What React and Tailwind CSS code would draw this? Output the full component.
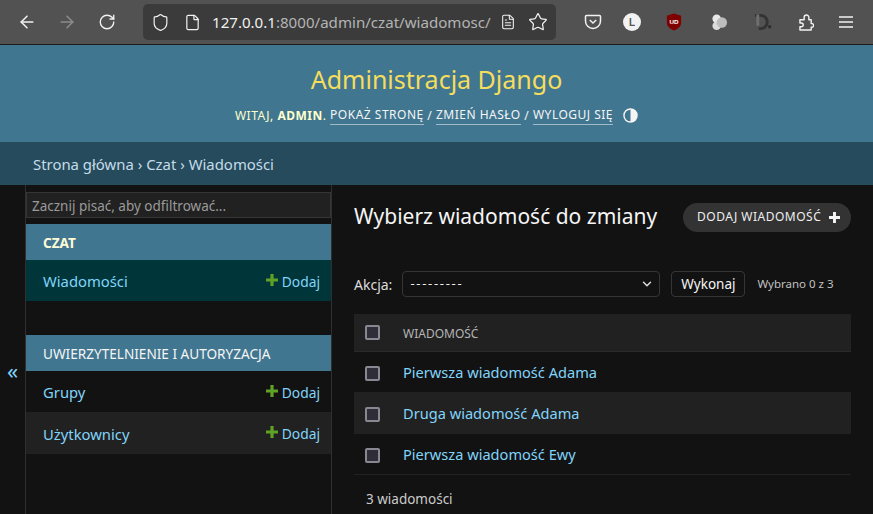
import React from 'react';
import { ArrowLeft, ArrowRight, RotateCw, Shield, File, FileText, Star, ChevronDown } from 'lucide-react';

const sans = "font-['Noto_Sans','Open_Sans',sans-serif]";

function PlusIcon({ className }) {
    return (
        <svg viewBox="0 0 12 12" className={className} fill="currentColor">
            <path d="M4.400 0h3.200v4.400H12v3.200H7.600V12H4.400V7.600H0V4.400h4.400z" />
        </svg>
    );
}

function Toolbar() {
    return (
        <div className="h-[45px] bg-[#525252] border-b border-[#1c1c1c] flex items-center text-[#f2f2f2] shrink-0">
            <ArrowLeft size={20} strokeWidth={1.8} className="ml-[17px]" />
            <ArrowRight size={20} strokeWidth={1.8} className="ml-[20px] text-[#8c8c8c]" />
            <RotateCw size={18} strokeWidth={1.8} className="ml-[21px]" />
            <div className="ml-[27px] w-[413px] h-[36px] bg-[#3b3b3b] rounded-[5px] flex items-center">
                <Shield size={19} strokeWidth={1.5} className="ml-[8px]" />
                <File size={17} strokeWidth={1.7} className="ml-[14px]" />
                <span className="ml-[11px] w-[283px] text-[15.100px] text-[#b4b4b4] whitespace-nowrap overflow-hidden font-['Noto_Sans',sans-serif]">
                    <span className="text-[#f0f0f0]">127.0.0.1</span>:8000/admin/czat/wiadomosc/
                </span>
                <FileText size={16} strokeWidth={1.6} className="ml-[5px]" />
                <Star size={20} strokeWidth={1.5} className="ml-[12px]" />
            </div>
            {/* ikony dodatków */}
            <svg viewBox="0 0 18 18" className="w-[18px] h-[18px] ml-[28px]" fill="none" stroke="currentColor" strokeWidth="1.5">
                <path d="M2.500 2.500h13a1 1 0 0 1 1 1V8a7.500 7.500 0 0 1-15 0V3.500a1 1 0 0 1 1-1z" />
                <path d="M5.800 7L9 10l3.200-3" />
            </svg>
            <div className="ml-[21px] w-[18px] h-[18px] rounded-full bg-[#f2f2f2] text-[#555] text-[10px] font-bold flex items-center justify-center font-['Liberation_Sans',sans-serif]">L</div>
            <svg viewBox="0 0 18 20" className="w-[16px] h-[18px] ml-[25px]">
                <path d="M9 0.500L17 3v8c0 4-4 7-8 8.500C5 18 1 15 1 11V3z" fill="#800000" />
                <text x="9" y="12" fontSize="7" fontWeight="700" textAnchor="middle" fill="#fff" fontFamily="Liberation Sans">UD</text>
            </svg>
            <svg viewBox="0 0 18 18" className="w-[17px] h-[17px] ml-[29px]">
                <circle cx="6" cy="5" r="4.500" fill="#e8e8e8" />
                <circle cx="6" cy="12.500" r="4.500" fill="#dcdcdc" />
                <circle cx="11.500" cy="9" r="5.500" fill="#bdbdbd" />
            </svg>
            <svg viewBox="0 0 20 18" className="w-[19px] h-[18px] ml-[26px]">
                <path d="M1 2h6a7 7 0 0 1 0 14H5" fill="none" stroke="#333" strokeWidth="3" />
                <path d="M4 1v12" stroke="#6f6f6f" strokeWidth="3" />
                <rect x="15" y="12.500" width="3" height="3" fill="#2c2c2c" />
            </svg>
            <svg viewBox="0 0 16 18" className="w-[15px] h-[17px] ml-[26px]" fill="none" stroke="currentColor" strokeWidth="1.5" strokeLinejoin="round">
                <path d="M1 6h4.500V3.500a2.500 2.500 0 0 1 5 0V6H13v4.200h1.200a2 2 0 0 1 0 3.800H13v3H1v-3.500h1.500a2 2 0 0 0 0-4H1z" />
            </svg>
            <svg viewBox="0 0 14 12" className="w-[14px] h-[12px] ml-[25px]" stroke="currentColor" strokeWidth="1.3">
                <path d="M0 1h14M0 6h14M0 11h14" />
            </svg>
        </div>
    );
}

function Caption({ children, bold }) {
    return (
        <div className={`h-[36px] bg-[#417690] flex items-center pl-[17px] pt-[2px] text-[13.600px] uppercase ${bold ? 'font-bold text-[#fefcd7]' : 'text-[#f5f5f5]'}`}>
            {children}
        </div>
    );
}

function ModelRow({ name, rowClass }) {
    return (
        <div className={`flex items-center justify-between pl-[17px] pr-[11px] pt-[2px] text-[#81d4fa] border-b border-[#222] ${rowClass}`}>
            <span className="text-[14.800px]">{name}</span>
            <span className="flex items-center pt-[1px] text-[13.800px]">
                <PlusIcon className="w-[12px] h-[12px] mr-[4px] mb-[5px] text-[#5fa225]" />
                Dodaj
            </span>
        </div>
    );
}

function Checkbox() {
    return <div className="w-[15px] h-[15px] rounded-[2px] border-2 border-[#8a8792] bg-[#2f2d38] shrink-0" />;
}

function ResultRow({ label, shaded }) {
    return (
        <div className={`h-[41px] flex items-center pl-[11px] pt-[2px] border-b border-[#222] ${shaded ? 'bg-[#212121]' : ''}`}>
            <Checkbox />
            <a className="ml-[23px] text-[14.600px] text-[#81d4fa]">{label}</a>
        </div>
    );
}

export default function App() {
    return (
        <div className={`w-[873px] h-[514px] overflow-hidden flex flex-col bg-[#121212] text-[#eee] ${sans}`}>
            <Toolbar />

            <div className="h-[97px] bg-[#417690] flex flex-col items-center shrink-0">
                <h1 className="mt-[16px] text-[25px] leading-[36px] text-[#f5dd5d]">Administracja Django</h1>
                <div className="mt-[9px] flex items-center text-[12px] tracking-[0.5px] uppercase text-[#ffc] leading-[18px]">
                    <span>Witaj, <strong className="font-bold">admin</strong>.&nbsp;</span>
                    <a className="text-[#f5f5f5] border-b border-[#a0bac8]">Pokaż stronę</a>
                    <span className="text-[#f5f5f5]">&nbsp;/&nbsp;</span>
                    <a className="text-[#f5f5f5] border-b border-[#a0bac8]">Zmień hasło</a>
                    <span className="text-[#f5f5f5]">&nbsp;/&nbsp;</span>
                    <a className="text-[#f5f5f5] border-b border-[#a0bac8]">Wyloguj się</a>
                    <svg viewBox="0 0 16 16" className="w-[15px] h-[15px] ml-[10px]">
                        <circle cx="8" cy="8" r="7" fill="#417690" stroke="#f5f5f5" strokeWidth="1.500" />
                        <path d="M8 1a7 7 0 0 1 0 14z" fill="#f5f5f5" />
                    </svg>
                </div>
            </div>

            <div className="h-[43px] bg-[#264b5d] flex items-center pl-[33px] pt-[2px] text-[14.900px] text-[#c4dce8] shrink-0">
                Strona główna › Czat › Wiadomości
            </div>

            <div className="flex flex-1 min-h-0">
                <div className="w-[26px] border-r border-[#2f2f2f] flex items-center justify-center shrink-0">
                    <span className="text-[22px] leading-none text-[#81d4fa] mt-[40px]">«</span>
                </div>

                <aside className="w-[306px] border-r border-[#2f2f2f] shrink-0 flex flex-col">
                    <div className="mt-[7px] h-[26px] bg-[#212121] border border-[#353535] flex items-center pl-[5px] pt-[2px] text-[13.500px] text-[#9a9a9a]">
                        Zacznij pisać, aby odfiltrować...
                    </div>
                    <div className="mt-[6px]">
                        <Caption bold>Czat</Caption>
                    </div>
                    <ModelRow name="Wiadomości" rowClass="h-[42px] bg-[#00363a] border-[#121212]" />
                    <div className="mt-[33px]">
                        <Caption>Uwierzytelnienie i autoryzacja</Caption>
                    </div>
                    <ModelRow name="Grupy" rowClass="h-[42px]" />
                    <ModelRow name="Użytkownicy" rowClass="h-[41px] bg-[#212121]" />
                </aside>

                <main className="flex-1 pl-[22px] pr-[22px] min-w-0">
                    <div className="mt-[18px] h-[28px] flex items-center justify-between">
                        <h2 className="text-[21px] text-[#f5f5f5] whitespace-nowrap">Wybierz wiadomość do zmiany</h2>
                        <a className="h-[29px] w-[168px] rounded-full bg-[#333] flex items-center pl-[14px] text-[12px] tracking-[0.5px] uppercase text-[#eee] whitespace-nowrap">
                            Dodaj wiadomość
                            <PlusIcon className="w-[11px] h-[11px] ml-[8px] text-[#f5f5f5]" />
                        </a>
                    </div>

                    <div className="mt-[40px] flex items-center h-[26px]">
                        <span className="text-[14px] text-[#ddd]">Akcja:</span>
                        <div className="ml-[10px] w-[258px] h-[26px] rounded-[4px] border border-[#353535] flex items-center justify-between pl-[7px] pr-[5px] text-[13px] tracking-[1.700px] bg-[#121212]">
                            <span>---------</span>
                            <ChevronDown size={14} strokeWidth={2.5} className="text-[#ddd]" />
                        </div>
                        <div className="ml-[11px] w-[74px] h-[26px] rounded-[4px] border border-[#353535] flex items-center justify-center text-[13.500px] text-[#f5f5f5]">Wykonaj</div>
                        <span className="ml-[12px] text-[11.500px] text-[#c0c0c0] whitespace-nowrap">Wybrano 0 z 3</span>
                    </div>

                    <div className="mt-[17px] h-[38px] bg-[#212121] border-b border-[#2a2a2a] flex items-center pl-[11px]">
                        <Checkbox />
                        <span className="ml-[23px] mt-[2px] text-[12px] uppercase text-[#b5b5b5]">Wiadomość</span>
                    </div>
                    <ResultRow label="Pierwsza wiadomość Adama" />
                    <ResultRow label="Druga wiadomość Adama" shaded />
                    <ResultRow label="Pierwsza wiadomość Ewy" />
                    <div className="mt-[14px] pl-[12px] text-[13.500px] text-[#ccc]">3 wiadomości</div>
                </main>
            </div>
        </div>
    );
}
